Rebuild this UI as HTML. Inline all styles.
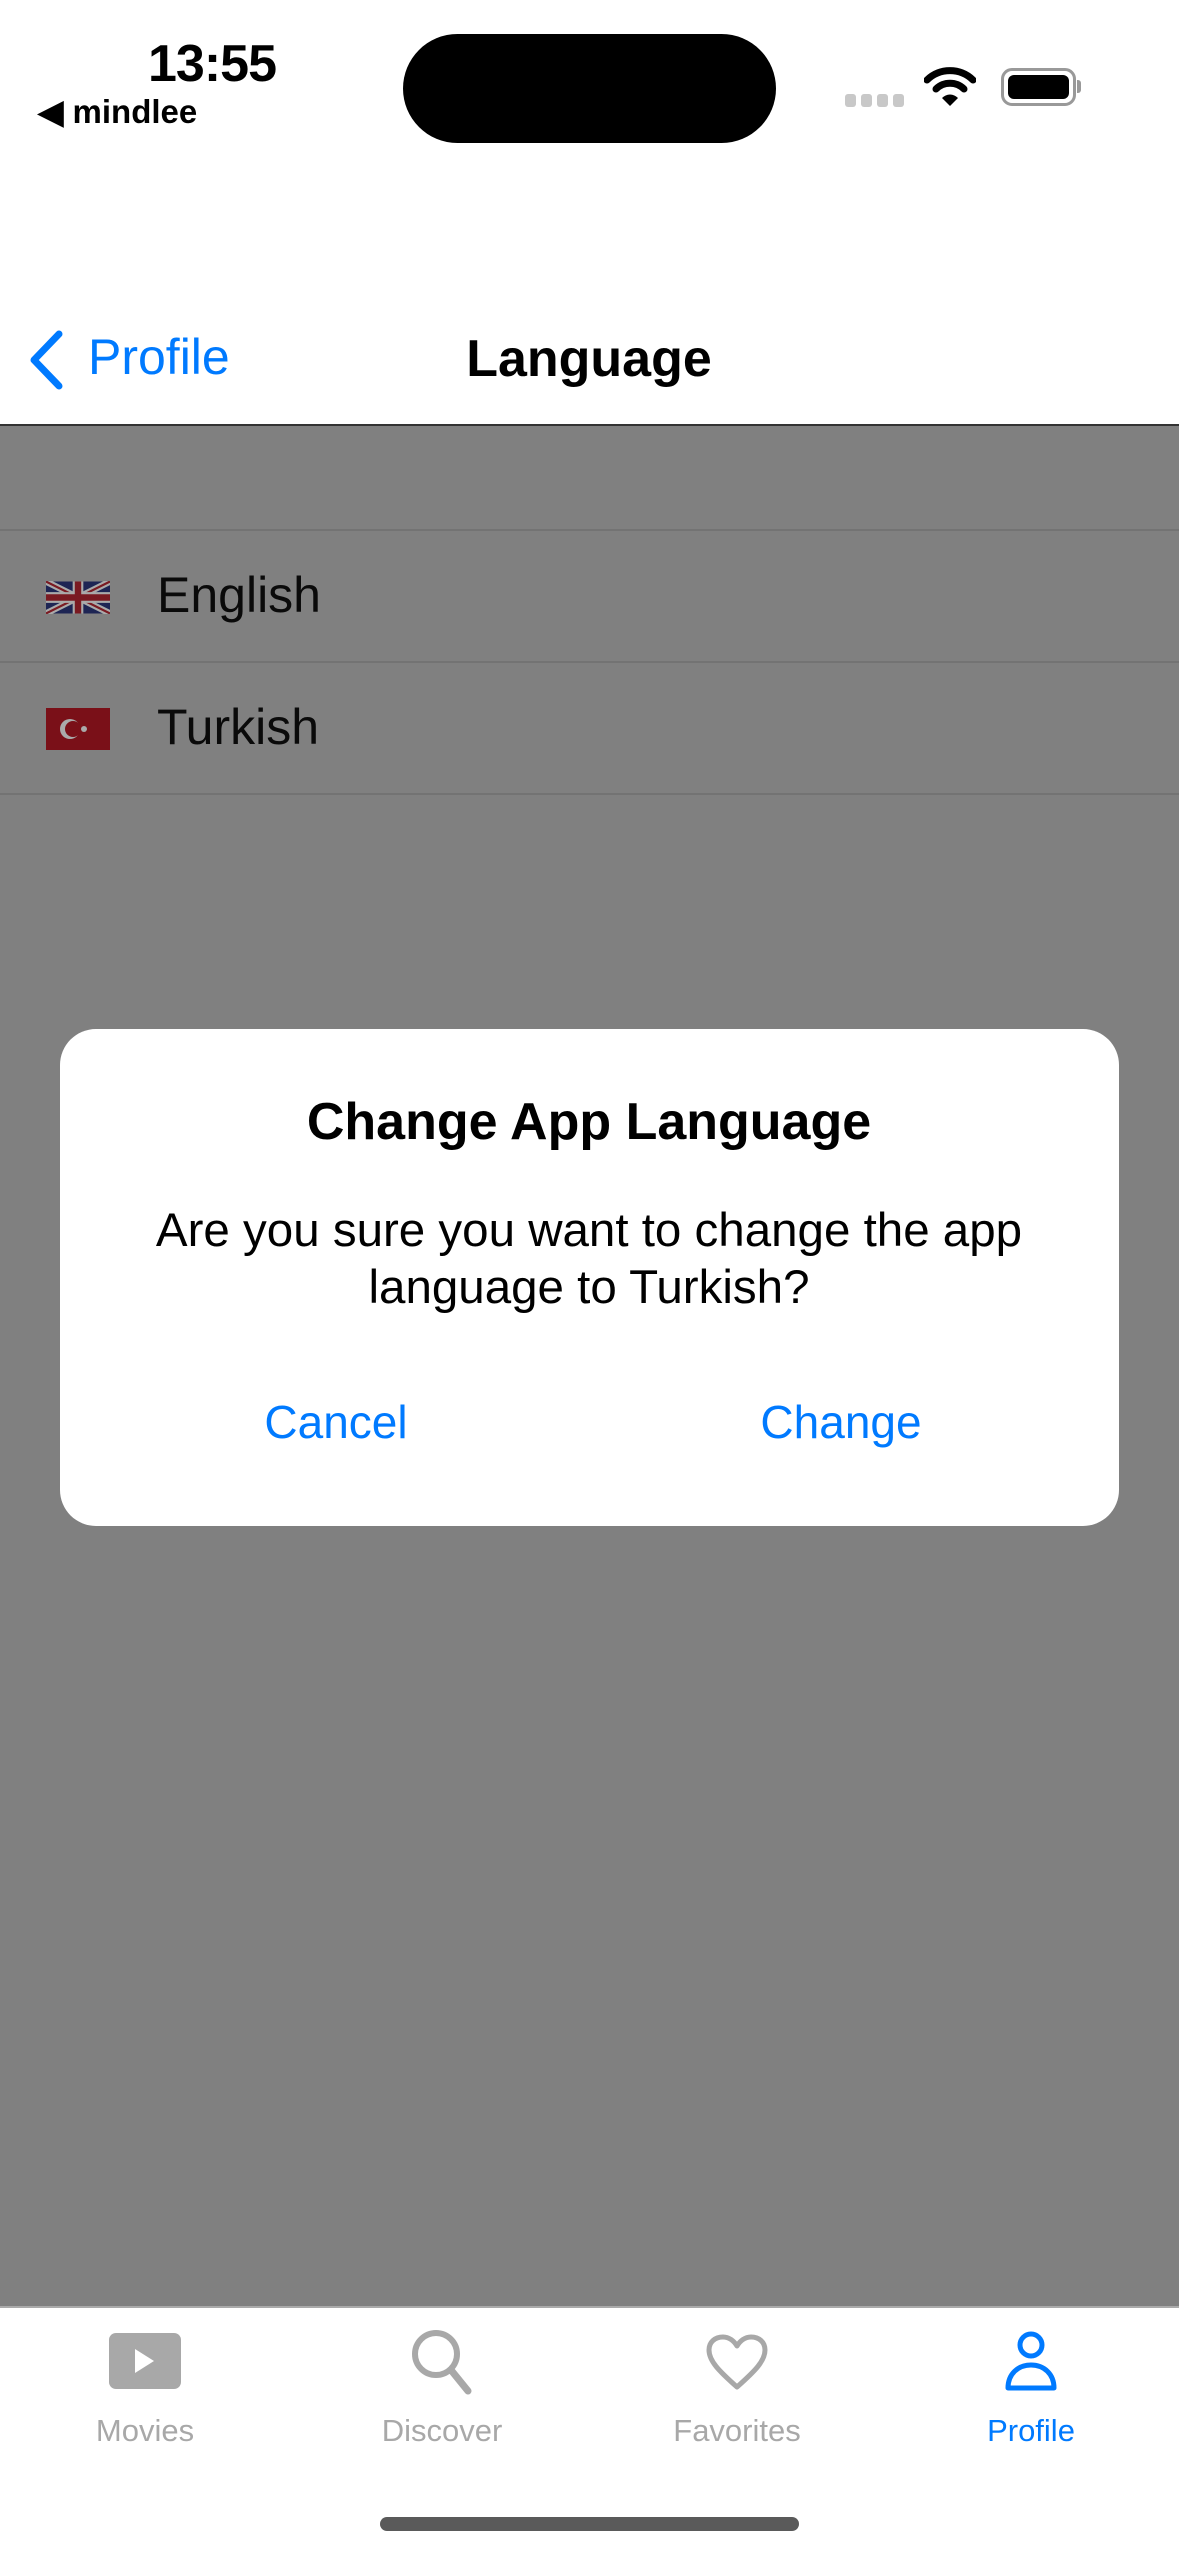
<!DOCTYPE html>
<html><head><meta charset="utf-8"><style>
*{margin:0;padding:0;box-sizing:border-box}
body{width:1179px;height:2556px;position:relative;overflow:hidden;background:#808080;font-family:"Liberation Sans",sans-serif}
.a{position:absolute}
.c{position:absolute;transform:translate(-50%,-50%);white-space:nowrap}
</style></head><body>
<div class="a" style="left:0;top:0;width:1179px;height:426px;background:#fff;border-bottom:2px solid #333"></div>
<div class="a" style="left:148px;top:34px;font-size:52px;font-weight:bold;letter-spacing:-1px">13:55</div>
<div class="a" style="left:38px;top:92px;font-size:33px;font-weight:bold">&#9664;&#xFE0E; mindlee</div>
<div class="a" style="left:403px;top:34px;width:373px;height:109px;border-radius:55px;background:#000"></div>
<div class="a" style="left:845px;top:94px;display:flex;gap:5px"><i style="width:11px;height:13px;background:#c8c8c8;border-radius:3px"></i><i style="width:11px;height:13px;background:#c8c8c8;border-radius:3px"></i><i style="width:11px;height:13px;background:#c8c8c8;border-radius:3px"></i><i style="width:11px;height:13px;background:#c8c8c8;border-radius:3px"></i></div>
<svg class="a" style="left:924px;top:66px" width="52" height="42" viewBox="0 0 52 42"><path d="M3 14 A33 33 0 0 1 49 14" stroke="#000" stroke-width="7" fill="none" stroke-linecap="round"/><path d="M12 23 A20 20 0 0 1 40 23" stroke="#000" stroke-width="7" fill="none" stroke-linecap="round"/><path d="M18 32 L26 40 L34 32 A11 11 0 0 0 18 32Z" fill="#000"/></svg>
<div class="a" style="left:1001px;top:68px;width:75px;height:38px;border:3px solid #999;border-radius:11px;padding:4px"><div style="width:100%;height:100%;background:#000;border-radius:6px"></div></div>
<div class="a" style="left:1077px;top:80px;width:4px;height:13px;background:#999;border-radius:0 3px 3px 0"></div>
<svg class="a" style="left:26px;top:330px" width="40" height="60" viewBox="0 0 40 60"><path d="M33 4 L8 30 L33 56" stroke="#007aff" stroke-width="7" fill="none" stroke-linecap="round" stroke-linejoin="round"/></svg>
<div class="a" style="left:88px;top:328px;font-size:50px;color:#007aff">Profile</div>
<div class="c" style="left:589px;top:359px;font-size:52px;font-weight:bold">Language</div>
<div class="a" style="left:0;top:529px;width:1179px;height:2px;background:#737373"></div>
<div class="a" style="left:0;top:661px;width:1179px;height:2px;background:#737373"></div>
<div class="a" style="left:0;top:793px;width:1179px;height:2px;background:#737373"></div>
<svg class="a" style="left:46px;top:581px" width="64" height="33" viewBox="0 0 60 30"><rect width="60" height="30" fill="#1e2554"/><path d="M0 0L60 30M60 0L0 30" stroke="#aaa" stroke-width="6"/><path d="M0 0L60 30M60 0L0 30" stroke="#7a1a22" stroke-width="2"/><path d="M30 0V30M0 15H60" stroke="#aaa" stroke-width="10"/><path d="M30 0V30M0 15H60" stroke="#7a1a22" stroke-width="6"/></svg>
<div class="a" style="left:157px;top:566px;font-size:50px;color:#0a0a0a">English</div>
<svg class="a" style="left:46px;top:708px" width="64" height="42" viewBox="0 0 64 42"><rect width="64" height="42" fill="#7a1018"/><circle cx="24" cy="21" r="10" fill="#aaa"/><circle cx="27" cy="21" r="8" fill="#7a1018"/><circle cx="38" cy="21" r="3" fill="#aaa"/></svg>
<div class="a" style="left:157px;top:698px;font-size:50px;color:#0a0a0a">Turkish</div>
<div class="a" style="left:60px;top:1029px;width:1059px;height:497px;background:#fff;border-radius:36px"></div>
<div class="c" style="left:589px;top:1122px;font-size:52px;font-weight:bold">Change App Language</div>
<div class="c" style="left:589px;top:1259px;font-size:47.5px;text-align:center;line-height:57px">Are you sure you want to change the app<br>language to Turkish?</div>
<div class="c" style="left:336px;top:1422px;font-size:46px;color:#007aff">Cancel</div>
<div class="c" style="left:841px;top:1422px;font-size:46px;color:#007aff">Change</div>
<div class="a" style="left:0;top:2306px;width:1179px;height:250px;background:#fff;border-top:2px solid #aaa"></div>
<svg class="a" style="left:109px;top:2333px" width="72" height="56" viewBox="0 0 72 56"><rect width="72" height="56" rx="7" fill="#a8a8a8"/><path d="M26 16V40L45 28Z" fill="#fff"/></svg>
<svg class="a" style="left:410px;top:2328px" width="64" height="68" viewBox="0 0 64 68"><circle cx="26" cy="26" r="21" stroke="#a8a8a8" stroke-width="6" fill="none"/><path d="M41 42L58 63" stroke="#a8a8a8" stroke-width="7" stroke-linecap="round"/></svg>
<svg class="a" style="left:705px;top:2333px" width="64" height="58" viewBox="0 0 64 58"><path d="M32 54C14 38 4 28 4 17C4 9 10 4 18 4C24 4 29 8 32 13C35 8 40 4 46 4C54 4 60 9 60 17C60 28 50 38 32 54Z" stroke="#a8a8a8" stroke-width="5" fill="none" stroke-linejoin="round"/></svg>
<svg class="a" style="left:1003px;top:2330px" width="56" height="62" viewBox="0 0 56 62"><circle cx="28" cy="15" r="11" stroke="#007aff" stroke-width="5" fill="none"/><path d="M5 58C5 44 15 35 28 35C41 35 51 44 51 58Z" stroke="#007aff" stroke-width="5" fill="none" stroke-linejoin="round"/></svg>
<div class="c" style="left:145px;top:2431px;font-size:31px;color:#a8a8a8">Movies</div>
<div class="c" style="left:442px;top:2431px;font-size:31px;color:#a8a8a8">Discover</div>
<div class="c" style="left:737px;top:2431px;font-size:31px;color:#a8a8a8">Favorites</div>
<div class="c" style="left:1031px;top:2431px;font-size:31px;color:#007aff">Profile</div>
<div class="a" style="left:380px;top:2517px;width:419px;height:14px;border-radius:7px;background:#5a5a5a"></div>
</body></html>
